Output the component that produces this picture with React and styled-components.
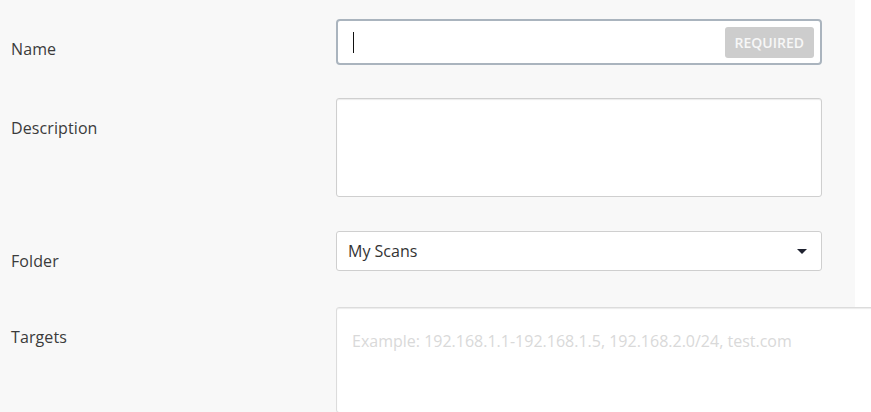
import React from 'react';
import styled, { createGlobalStyle } from 'styled-components';

const GlobalStyle = createGlobalStyle`
  html, body {
    margin: 0;
    padding: 0;
    background: #ffffff;
  }
  body {
    font-family: 'Open Sans', 'Noto Sans', sans-serif;
    overflow: hidden;
  }
`;

const Panel = styled.div`
  width: 855px;
  height: 412px;
  background: #f8f8f8;
  padding-top: 19px;
  box-sizing: border-box;
`;

const Row = styled.div`
  display: grid;
  grid-template-columns: 336px 486px;
  margin-bottom: ${(p) => p.$gap || 0}px;
`;

const Label = styled.label`
  padding: 20px 0 0 11px;
  font-size: 16px;
  line-height: 20px;
  color: #3b3b3b;
  letter-spacing: 0.1px;
`;

const TextField = styled.div`
  height: 46px;
  box-sizing: border-box;
  border: 2px solid #aab4be;
  border-radius: 4px;
  background: #fff;
  display: flex;
  align-items: center;
  justify-content: space-between;
  padding: 0 6px 0 15px;
`;

const Caret = styled.span`
  width: 1px;
  height: 21px;
  background: #111;
`;

const Badge = styled.span`
  height: 31px;
  padding: 0 10px 0 10px;
  display: flex;
  align-items: center;
  border-radius: 3px;
  background: #cdcdcd;
  color: #f7f7f7;
  font-size: 14px;
  font-weight: 600;
`;

const TextArea = styled.div`
  height: ${(p) => p.$height}px;
  width: ${(p) => p.$width || 486}px;
  box-sizing: border-box;
  border: 1px solid ${(p) => p.$border || '#cfcfcf'};
  border-radius: 3px;
  background: #fff;
  box-shadow: inset 0 1px 1px rgba(0, 0, 0, 0.08);
  padding: 23px 15px;
  font-size: 16px;
  line-height: 20px;
  color: #d9d9d9;
  white-space: nowrap;
`;

const Select = styled.div`
  height: 40px;
  box-sizing: border-box;
  border: 1px solid #cfcfcf;
  border-radius: 3px;
  background: #fff;
  display: flex;
  align-items: center;
  justify-content: space-between;
  padding: 0 14px 0 11px;
  font-size: 16px;
  color: #333;
`;

const Arrow = styled.span`
  width: 0;
  height: 0;
  border-left: 5px solid transparent;
  border-right: 5px solid transparent;
  border-top: 5px solid #1f2230;
`;

const App = () => {
  return (
    <>
      <GlobalStyle />
      <Panel>
        <Row $gap={33}>
          <Label>Name</Label>
          <TextField>
            <Caret />
            <Badge>REQUIRED</Badge>
          </TextField>
        </Row>
        <Row $gap={34}>
          <Label>Description</Label>
          <TextArea $height={99} />
        </Row>
        <Row $gap={36}>
          <Label>Folder</Label>
          <Select>
            <span>My Scans</span>
            <Arrow />
          </Select>
        </Row>
        <Row>
          <Label>Targets</Label>
          <TextArea $height={106} $width={560} $border="#dcdcdc">
            Example: 192.168.1.1-192.168.1.5, 192.168.2.0/24, test.com
          </TextArea>
        </Row>
      </Panel>
    </>
  );
};

export default App;
